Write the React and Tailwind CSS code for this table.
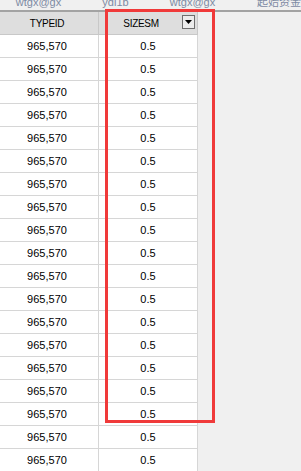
import React from "react";

const rows = Array.from({ length: 19 });

export default function App() {
  return (
    <div
      className="relative w-[301px] h-[471px] overflow-hidden bg-[#f0f0f0] text-[11px] text-black"
      style={{ fontFamily: '"Liberation Sans", "Noto Sans CJK SC", sans-serif' }}
    >
      {/* cut-off header above */}
      <div className="h-[10px] overflow-hidden bg-[#f0f0f0]">
        <div className="-mt-[4px] flex leading-[13px] text-[#7d8aa3] whitespace-nowrap">
          <div className="w-[79px] text-center">wtgx@gx</div>
          <div className="w-[79px] text-center">ydi1b</div>
          <div className="w-[79px] text-center">wtgx@gx</div>
          <div className="pl-[26px]">起始资金</div>
        </div>
      </div>
      <div className="h-[2px] bg-[#a3a3a3]" />

      <div className="flex">
        <div className="w-[198px] flex flex-col">
          {/* header row */}
          <div className="flex h-[23px] bg-[#dedede] border-b border-[#c8c8c8]">
            <div className="w-[99px] border-r border-[#c8c8c8] flex items-center justify-center pr-[4px] text-[10px] tracking-[-0.3px]">
              TYPEID
            </div>
            <div className="w-[99px] border-r border-[#c8c8c8] relative flex items-center justify-center pr-[14px] text-[10px] tracking-[-0.3px]">
              SIZESM
              <div className="absolute left-[83px] top-[3px] w-[13px] h-[14px] border border-[#6e6e6e] bg-[#ececec] flex items-center justify-center">
                <svg width="7" height="4" viewBox="0 0 7 4">
                  <path d="M0 0H7L3.5 4Z" fill="#000" />
                </svg>
              </div>
            </div>
          </div>
          {rows.map((_, i) => (
            <div key={i} className="flex h-[23px] bg-white border-b border-[#d6d6d6]">
              <div className="w-[99px] border-r border-[#d6d6d6] flex items-center justify-center pr-[4px]">
                965,570
              </div>
              <div className="w-[99px] border-r border-[#d6d6d6] flex items-center justify-center">
                0.5
              </div>
            </div>
          ))}
        </div>
      </div>

      {/* red highlight overlay */}
      <div className="absolute left-[105px] top-[9px] w-[110px] h-[414px] border-[3px] border-[#f03a3a] pointer-events-none" />
    </div>
  );
}
